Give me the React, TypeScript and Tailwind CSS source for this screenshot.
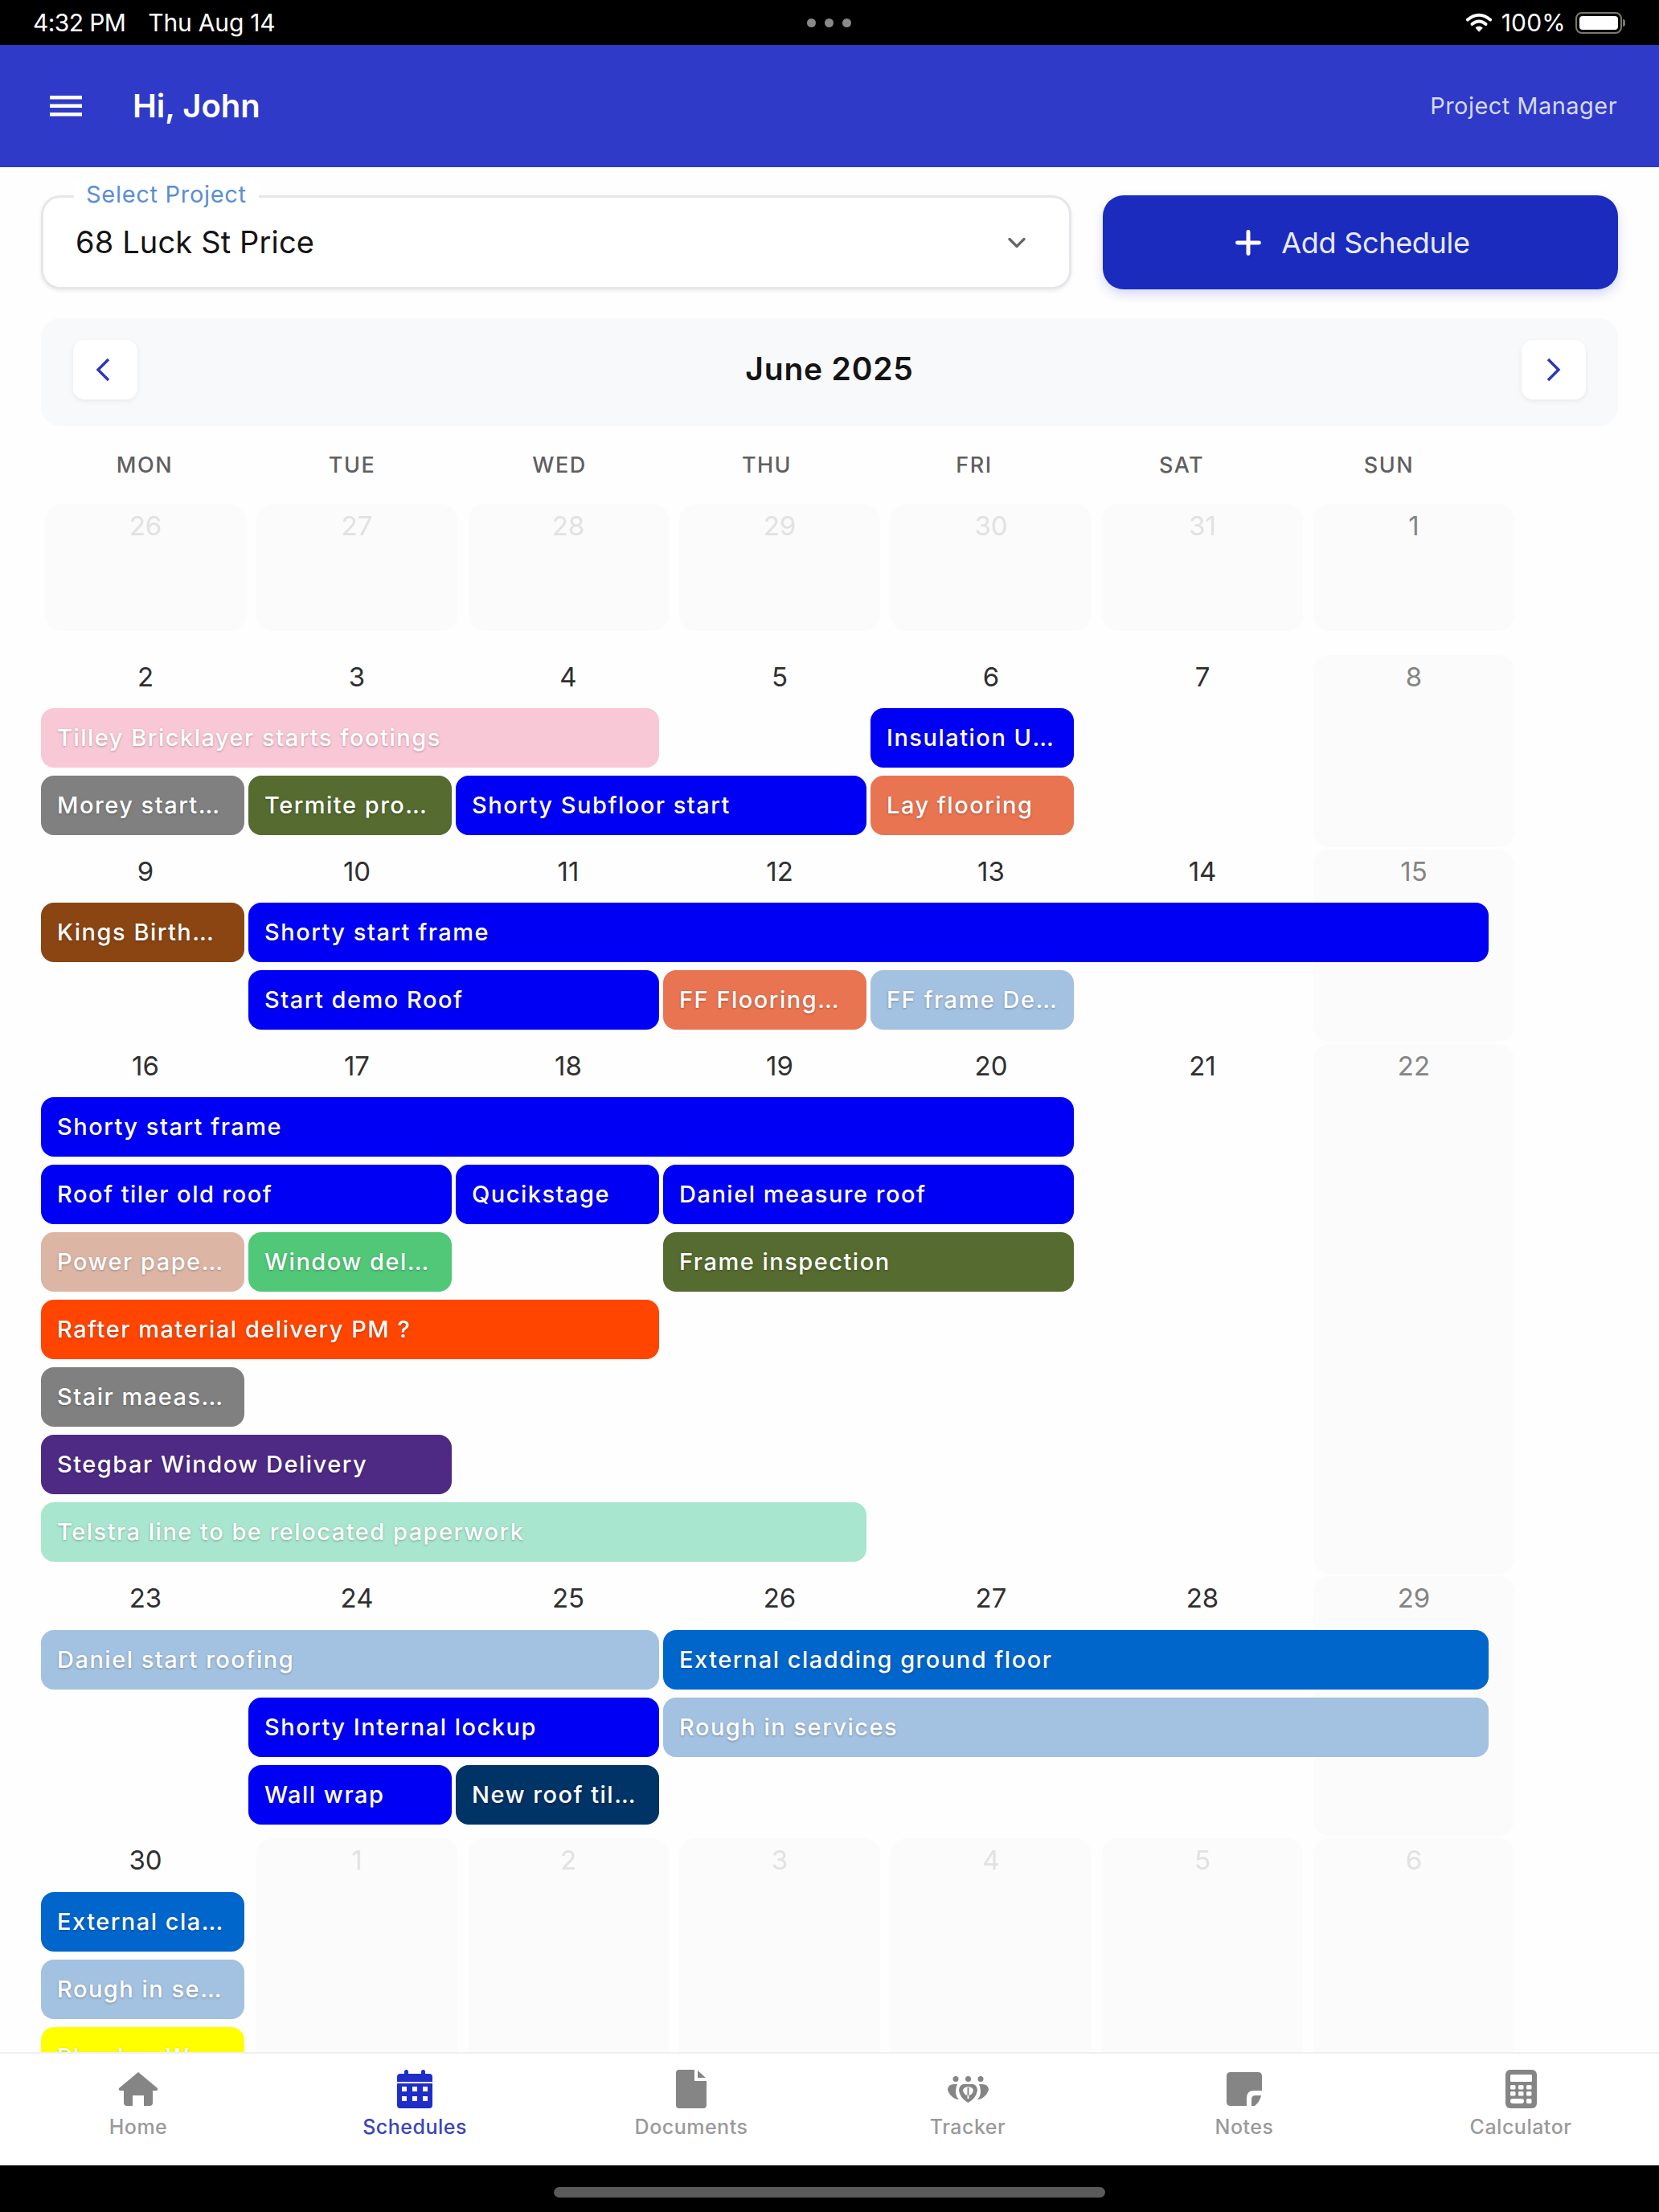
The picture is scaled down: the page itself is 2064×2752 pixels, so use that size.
import React from "react"
import { ChevronDown, Plus } from "lucide-react"

const FONT = "font-['Inter','Noto_Sans',sans-serif]"

const START = ["col-start-1", "col-start-2", "col-start-3", "col-start-4", "col-start-5", "col-start-6", "col-start-7"]
const SPAN = ["col-span-1", "col-span-1", "col-span-2", "col-span-3", "col-span-4", "col-span-5", "col-span-6", "col-span-7"]

const BLUE = "bg-[#0000f5]"
const SKY = "bg-[#a3c1e0]"
const GRAY = "bg-[#808080]"
const OLIVE = "bg-[#556b2f]"
const CORAL = "bg-[#e97451]"
const CLAD = "bg-[#0066cc]"

type Bar = { label: string; bg: string; col: number; span?: number }
type Cell = { n: number; kind: "day" | "sun" | "out" }
type Week = { cells: Cell[]; lanes: Bar[][]; first?: boolean; low?: boolean }

const days = (nums: number[], out: number[] = []): Cell[] =>
  nums.map((n, i) => ({ n, kind: out.includes(i) ? "out" : i === 6 ? "sun" : "day" }))

const weeks: Week[] = [
  { first: true, cells: days([26, 27, 28, 29, 30, 31, 1], [0, 1, 2, 3, 4, 5]), lanes: [] },
  {
    cells: days([2, 3, 4, 5, 6, 7, 8]),
    lanes: [
      [
        { label: "Tilley Bricklayer starts footings", bg: "bg-[#f9c8d6]", col: 0, span: 3 },
        { label: "Insulation U...", bg: BLUE, col: 4 },
      ],
      [
        { label: "Morey start...", bg: GRAY, col: 0 },
        { label: "Termite pro...", bg: OLIVE, col: 1 },
        { label: "Shorty Subfloor start", bg: BLUE, col: 2, span: 2 },
        { label: "Lay flooring", bg: CORAL, col: 4 },
      ],
    ],
  },
  {
    cells: days([9, 10, 11, 12, 13, 14, 15]),
    lanes: [
      [
        { label: "Kings Birth...", bg: "bg-[#8b4513]", col: 0 },
        { label: "Shorty start frame", bg: BLUE, col: 1, span: 6 },
      ],
      [
        { label: "Start demo Roof", bg: BLUE, col: 1, span: 2 },
        { label: "FF Flooring...", bg: CORAL, col: 3 },
        { label: "FF frame De...", bg: SKY, col: 4 },
      ],
    ],
  },
  {
    cells: days([16, 17, 18, 19, 20, 21, 22]),
    lanes: [
      [{ label: "Shorty start frame", bg: BLUE, col: 0, span: 5 }],
      [
        { label: "Roof tiler old roof", bg: BLUE, col: 0, span: 2 },
        { label: "Qucikstage", bg: BLUE, col: 2 },
        { label: "Daniel measure roof", bg: BLUE, col: 3, span: 2 },
      ],
      [
        { label: "Power pape...", bg: "bg-[#dcb5a5]", col: 0 },
        { label: "Window del...", bg: "bg-[#50c878]", col: 1 },
        { label: "Frame inspection", bg: OLIVE, col: 3, span: 2 },
      ],
      [{ label: "Rafter material delivery PM ?", bg: "bg-[#ff4500]", col: 0, span: 3 }],
      [{ label: "Stair maeas...", bg: GRAY, col: 0 }],
      [{ label: "Stegbar Window Delivery", bg: "bg-[#4e2a84]", col: 0, span: 2 }],
      [{ label: "Telstra line to be relocated paperwork", bg: "bg-[#a8e6cf]", col: 0, span: 4 }],
    ],
  },
  {
    low: true,
    cells: days([23, 24, 25, 26, 27, 28, 29]),
    lanes: [
      [
        { label: "Daniel start roofing", bg: SKY, col: 0, span: 3 },
        { label: "External cladding ground floor", bg: CLAD, col: 3, span: 4 },
      ],
      [
        { label: "Shorty Internal lockup", bg: BLUE, col: 1, span: 2 },
        { label: "Rough in services", bg: SKY, col: 3, span: 4 },
      ],
      [
        { label: "Wall wrap", bg: BLUE, col: 1 },
        { label: "New roof til...", bg: "bg-[#003366]", col: 2 },
      ],
    ],
  },
  {
    low: true,
    cells: days([30, 1, 2, 3, 4, 5, 6], [1, 2, 3, 4, 5, 6]),
    lanes: [
      [{ label: "External cla...", bg: CLAD, col: 0 }],
      [{ label: "Rough in se...", bg: SKY, col: 0 }],
      [{ label: "Plumber W...", bg: "bg-[#ffff00]", col: 0 }],
    ],
  },
]

const HomeIcon = () => (
  <svg width="50" height="42" viewBox="0 0 50 42" fill="#858585">
    <path d="M25 0 L49 20 Q50 23 47 23 L43 23 L43 38 Q43 42 39 42 L32 42 L32 29 L18 29 L18 42 L11 42 Q7 42 7 38 L7 23 L3 23 Q0 23 1 20 Z" />
  </svg>
)

const CalendarIcon = () => (
  <svg width="44" height="48" viewBox="0 0 44 48" fill="#1f2dc9">
    <rect x="9" y="0" width="5" height="9" rx="2.5" />
    <rect x="30" y="0" width="5" height="9" rx="2.5" />
    <path d="M4 5 H40 Q44 5 44 9 V15 H0 V9 Q0 5 4 5 Z" />
    <path
      fillRule="evenodd"
      d="M0 17 H44 V44 Q44 48 40 48 H4 Q0 48 0 44 Z M6 21 V27 H12 V21 Z M19 21 V27 H25 V21 Z M32 21 V27 H38 V21 Z M6 33 V39 H12 V33 Z M19 33 V39 H25 V33 Z M32 33 V39 H38 V33 Z"
    />
  </svg>
)

const DocumentIcon = () => (
  <svg width="38" height="48" viewBox="0 0 38 48" fill="#858585">
    <path d="M4 0 H23 V14 H38 V44 Q38 48 34 48 H4 Q0 48 0 44 V4 Q0 0 4 0 Z" />
    <path d="M27 1 L37 10 H27 Z" />
  </svg>
)

const TrackerIcon = () => (
  <svg width="51" height="33" viewBox="0 0 51 33" fill="#858585">
    <circle cx="10" cy="3.5" r="3.5" />
    <circle cx="25.5" cy="3.5" r="3.5" />
    <circle cx="41" cy="3.5" r="3.5" />
    <path d="M8 10 H12 Q10 14 10 19 Q10 25 14 29 Q9 29 5 25 Q0 20 0 16 Q1 10 8 10 Z" />
    <path d="M43 10 H39 Q41 14 41 19 Q41 25 37 29 Q42 29 46 25 Q51 20 51 16 Q50 10 43 10 Z" />
    <path
      fillRule="evenodd"
      d="M19 10 H32 Q37 12 37 18 Q35 28 25.5 33 Q16 28 14 18 Q14 12 19 10 Z M25.5 13 Q19 14 19 18 Q20 23 24.5 24 V28 H26.5 V24 Q31 23 32 18 Q32 14 25.5 13 Z"
    />
    <rect x="24.5" y="14" width="2" height="10" />
  </svg>
)

const NotesIcon = () => (
  <svg width="44" height="42" viewBox="0 0 44 42" fill="#858585">
    <path d="M5 0 H39 Q44 0 44 5 V23 H34 Q25 23 25 32 V42 H5 Q0 42 0 37 V5 Q0 0 5 0 Z" />
    <path d="M31 42 V34 Q31 29 36 29 H43 Q42 36 35 42 Z" />
  </svg>
)

const CalculatorIcon = () => (
  <svg width="39" height="48" viewBox="0 0 39 48">
    <rect width="39" height="48" rx="6" fill="#858585" />
    <rect x="6" y="6" width="27" height="9" rx="1.5" fill="#fff" />
    {[19, 27].map((y) =>
      [6, 16, 26].map((x) => <rect key={`${x}-${y}`} x={x} y={y} width="6.5" height="5.5" rx="1.5" fill="#fff" />),
    )}
    <rect x="6" y="36" width="17" height="6" rx="3" fill="#fff" />
    <rect x="26" y="36" width="6.5" height="6" rx="1.5" fill="#fff" />
  </svg>
)

const tabs = [
  { label: "Home", icon: <HomeIcon /> },
  { label: "Schedules", icon: <CalendarIcon />, active: true },
  { label: "Documents", icon: <DocumentIcon /> },
  { label: "Tracker", icon: <TrackerIcon /> },
  { label: "Notes", icon: <NotesIcon /> },
  { label: "Calculator", icon: <CalculatorIcon /> },
]

const StatusBar = () => (
  <div className="h-[56px] shrink-0 bg-black text-white grid grid-cols-[1fr_auto_1fr] items-center pl-[41px] pr-[42px] text-[30px]">
    <div className="flex whitespace-nowrap">
      <span className="tracking-[-0.6px]">4:32 PM</span>
      <span className="ml-[28px] tracking-[-0.2px]">Thu Aug 14</span>
    </div>
    <div className="flex gap-[11px]">
      <span className="w-[11px] h-[11px] rounded-full bg-[#8a8a8a]" />
      <span className="w-[11px] h-[11px] rounded-full bg-[#8a8a8a]" />
      <span className="w-[11px] h-[11px] rounded-full bg-[#8a8a8a]" />
    </div>
    <div className="flex items-center justify-end">
      <svg width="34" height="24" viewBox="0 0 33 24" fill="none" stroke="#fff" strokeWidth="4" strokeLinecap="round">
        <path d="M2.5 8.5 Q16.5 -3 30.5 8.5" />
        <path d="M8 14 Q16.5 7 25 14" />
        <path d="M16.5 23 L12.5 18.5 Q16.5 15.5 20.5 18.5 Z" fill="#fff" strokeWidth="1" strokeLinejoin="round" />
      </svg>
      <span className="ml-[11px] tracking-[0.2px]">100%</span>
      <div className="ml-[12px] w-[58px] h-[27px] rounded-[8px] border-2 border-[#7a7a6a] p-[3px]">
        <div className="w-full h-full rounded-[4px] bg-white" />
      </div>
      <div className="w-[3px] h-[9px] ml-[1px] rounded-r-sm bg-[#7a7a6a]" />
    </div>
  </div>
)

const EventBar = ({ bar }: { bar: Bar }) => {
  const cut = bar.label.endsWith("...")
  return (
    <div
      className={`${START[bar.col]} ${SPAN[bar.span ?? 1]} ${bar.bg} h-[74px] rounded-[16px] pl-[20px] pr-[10px] flex items-center overflow-hidden whitespace-pre text-white text-[29px] font-medium tracking-[1.5px] [text-shadow:0_1px_3px_rgba(0,0,0,0.28)]`}
    >
      <span>
        {cut ? bar.label.slice(0, -3) : bar.label}
        {cut && <span className="tracking-normal">...</span>}
      </span>
    </div>
  )
}

const WeekRow = ({ week }: { week: Week }) => (
  <div className={`grid ${week.first ? "mb-[27px]" : ""}`}>
    <div className="[grid-area:1/1] grid grid-cols-[repeat(7,263px)]">
      {week.cells.map((c, i) => (
        <div
          key={i}
          className={`ml-[5px] mr-[8px] mb-[3px] rounded-[20px] pt-[7px] text-center text-[33px] leading-[40px] ${
            c.kind === "day"
              ? "text-[#303030]"
              : c.kind === "sun"
                ? "bg-[#fbfbfb] text-[#858585]"
                : "bg-[#fbfbfb] text-[#e2e2e2]"
          } ${week.first ? "min-h-[158px]" : ""}`}
        >
          {c.n}
        </div>
      ))}
    </div>
    {week.lanes.length > 0 && (
      <div className={`[grid-area:1/1] flex flex-col gap-[10px] ${week.low ? "pt-[67px] pb-[17px]" : "pt-[66px] pb-[18px]"}`}>
        {week.lanes.map((lane, i) => (
          <div key={i} className="grid grid-cols-[repeat(7,253px)] gap-x-[5px]">
            {lane.map((bar) => (
              <EventBar key={bar.label} bar={bar} />
            ))}
          </div>
        ))}
      </div>
    )}
  </div>
)

export default function App() {
  return (
    <div className={`w-[2064px] h-[2752px] flex flex-col overflow-hidden bg-[#fefefe] ${FONT}`}>
      <StatusBar />

      <div className="h-[152px] shrink-0 bg-[#2f3ac8] flex items-center pl-[62px] pr-[52px] text-white">
        <svg width="40" height="26" viewBox="0 0 40 26" fill="#fff">
          <rect y="0" width="40" height="4.5" />
          <rect y="10.5" width="40" height="4.5" />
          <rect y="21" width="40" height="4.5" />
        </svg>
        <span className="ml-[63px] text-[40px] font-semibold flex-1">Hi, John</span>
        <span className="text-[29px] text-[#d5d8f5] tracking-[0.45px]">Project Manager</span>
      </div>

      <div className="flex-1 min-h-0 overflow-hidden px-[51px] pt-[35px]">
        <div className="flex gap-[39px]">
          <div className="relative w-[1282px] h-[117px] rounded-[24px] border-[3px] border-[#e6e7ea] bg-white shadow-[0_2px_5px_rgba(0,0,0,0.08)] flex items-center pl-[40px] pr-[47px]">
            <span className="absolute -top-[21px] left-[38px] px-[15px] bg-white text-[29px] leading-[34px] text-[#5a8fd2] tracking-[0.7px]">
              Select Project
            </span>
            <span className="flex-1 text-[38px] tracking-[0.15px] text-[#141414]">68 Luck St Price</span>
            <ChevronDown size={36} strokeWidth={2.2} className="text-[#666]" />
          </div>
          <div className="flex-1 h-[117px] rounded-[26px] bg-[#1a2bbe] shadow-[0_6px_14px_rgba(26,43,190,0.18)] flex items-center justify-center gap-[18px] pr-[26px] text-white">
            <Plus size={46} strokeWidth={2.6} />
            <span className="text-[36px] tracking-[-0.3px] text-[#e8eaff]">Add Schedule</span>
          </div>
        </div>

        <div className="mt-[36px] h-[134px] rounded-[24px] bg-[#f8f9fb] flex items-center justify-between pl-[40px] pr-[40px] pb-[7px]">
          <button className="w-[80px] h-[74px] rounded-[14px] bg-white shadow-[0_2px_6px_rgba(0,0,0,0.07)] flex items-center justify-center pr-[6px]">
            <svg width="20" height="30" viewBox="0 0 20 30" fill="none" stroke="#2a35c0" strokeWidth="3.4">
              <path d="M17 2 L4 15 L17 28" />
            </svg>
          </button>
          <span className="text-[39px] font-semibold text-[#141414] tracking-[0.8px]">June 2025</span>
          <button className="w-[80px] h-[74px] rounded-[14px] bg-white shadow-[0_2px_6px_rgba(0,0,0,0.07)] flex items-center justify-center">
            <svg width="20" height="30" viewBox="0 0 20 30" fill="none" stroke="#2a35c0" strokeWidth="3.4">
              <path d="M3 2 L16 15 L3 28" />
            </svg>
          </button>
        </div>

        <div className="grid grid-cols-[repeat(7,258px)] pt-[30px] pb-[29px] text-center text-[27px] leading-[38px] font-medium text-[#5f5f5f] tracking-[1.5px]">
          {["MON", "TUE", "WED", "THU", "FRI", "SAT", "SUN"].map((d) => (
            <span key={d}>{d}</span>
          ))}
        </div>

        {weeks.map((w, i) => (
          <WeekRow key={i} week={w} />
        ))}
      </div>

      <div className="h-[141px] shrink-0 bg-white border-t-2 border-[#eeeeee] grid grid-cols-6 pt-[18px]">
        {tabs.map((t) => (
          <div key={t.label} className="flex flex-col items-center">
            <div className="h-[52px] flex items-center justify-center">{t.icon}</div>
            <span
              className={`mt-[6px] text-[25px] leading-[30px] font-medium tracking-[0.5px] ${
                t.active ? "text-[#3a45b8]" : "text-[#9a9a9a]"
              }`}
            >
              {t.label}
            </span>
          </div>
        ))}
      </div>

      <div className="h-[58px] shrink-0 bg-black flex justify-center pt-[27px]">
        <div className="w-[686px] h-[13px] rounded-full bg-[#5a5a5a]" />
      </div>
    </div>
  )
}
